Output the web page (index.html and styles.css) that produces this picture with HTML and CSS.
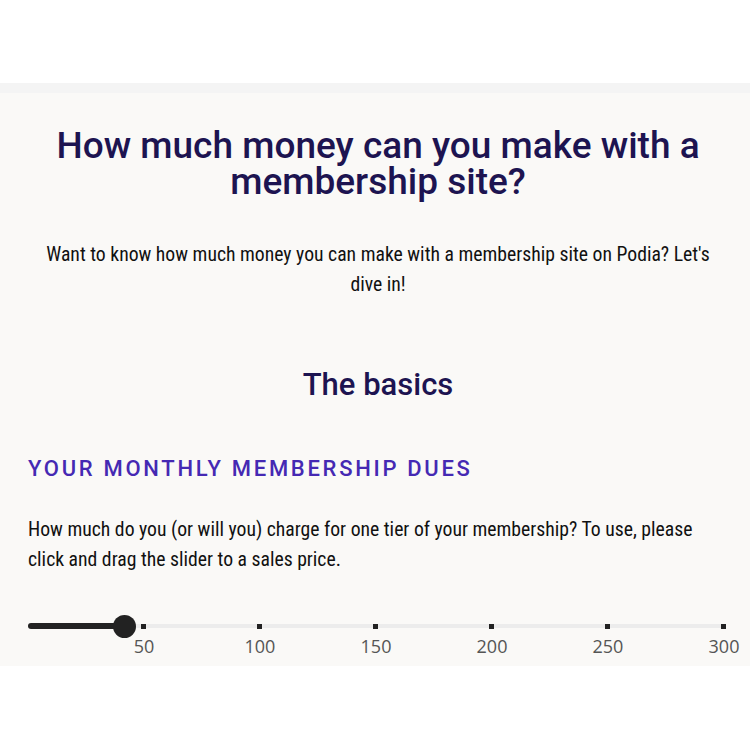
FILE: index.html
```html
<!DOCTYPE html>
<html lang="en">
<head>
<meta charset="utf-8">
<title>Membership calculator</title>
<link rel="stylesheet" href="styles.css">
</head>
<body>
<header class="topbar"></header>
<div class="band"></div>
<main class="calc">
  <h1 class="title">How much money can you make with a membership site?</h1>
  <p class="intro">Want to know how much money you can make with a membership site on Podia? Let's dive in!</p>
  <h2 class="section">The basics</h2>
  <h3 class="label">Your monthly membership dues</h3>
  <p class="desc">How much do you (or will you) charge for one tier of your membership? To use, please click and drag the slider to a sales price.</p>
  <div class="slider">
    <div class="track">
      <div class="fill" style="width: 13.9%"></div>
      <span class="tick" style="left: 16.667%"></span>
      <span class="tick" style="left: 33.333%"></span>
      <span class="tick" style="left: 50%"></span>
      <span class="tick" style="left: 66.667%"></span>
      <span class="tick" style="left: 83.333%"></span>
      <span class="tick" style="left: 100%"></span>
      <span class="thumb" style="left: 13.9%"></span>
    </div>
    <div class="scale">
      <span class="num" style="left: 16.667%">50</span>
      <span class="num" style="left: 33.333%">100</span>
      <span class="num" style="left: 50%">150</span>
      <span class="num" style="left: 66.667%">200</span>
      <span class="num" style="left: 83.333%">250</span>
      <span class="num" style="left: 100%">300</span>
    </div>
  </div>
</main>
</body>
</html>
```
FILE: styles.css
```css
* { box-sizing: border-box; }
html, body { margin: 0; padding: 0; background: #ffffff; }
body { font-family: Roboto, "Noto Sans", Arial, sans-serif; color: #111; }

.topbar { height: 83px; background: #ffffff; }
.band { height: 10px; background: #f4f4f4; }

.calc {
  background: #faf9f7;
  padding: 35px 22px 0 28px;
  height: 573px;
}

.title {
  margin: 0;
  font-size: 37px;
  line-height: 36px;
  font-weight: 500;
  color: #1d1451;
  text-align: center;
}

.intro {
  margin: 40px 0 0 0;
  padding: 0 10px;
  font-family: "Roboto Condensed", Roboto, sans-serif;
  font-stretch: condensed;
  font-size: 19.7px;
  line-height: 30px;
  text-align: center;
}

.section {
  margin: 67px 0 0 0;
  font-size: 31px;
  line-height: 36px;
  font-weight: 500;
  color: #1d1451;
  text-align: center;
}

.label {
  margin: 52px 0 0 0;
  font-size: 22px;
  line-height: 28px;
  font-weight: 500;
  letter-spacing: 2.7px;
  text-transform: uppercase;
  color: #4529b3;
}

.desc {
  margin: 32px 0 0 0;
  font-family: "Roboto Condensed", Roboto, sans-serif;
  font-stretch: condensed;
  font-size: 19.7px;
  line-height: 30px;
}

.slider {
  margin-top: 49px;
  width: 696px;
}

.track {
  position: relative;
  height: 4px;
  background: #ececec;
}

.fill {
  position: absolute;
  left: 0;
  top: -1px;
  height: 6px;
  background: #222222;
  border-radius: 3px;
}

.tick {
  position: absolute;
  top: 0;
  width: 5px;
  height: 5px;
  margin-left: -3px;
  background: #222222;
}

.thumb {
  position: absolute;
  top: 50%;
  width: 23px;
  height: 23px;
  margin: -11.5px 0 0 -11.5px;
  border-radius: 50%;
  background: #222222;
}

.scale {
  position: relative;
  height: 24px;
  margin-top: 8px;
}

.num {
  position: absolute;
  top: 0;
  transform: translateX(-50%);
  font-family: "Open Sans", "Liberation Sans", Arial, sans-serif;
  font-size: 18px;
  line-height: 20px;
  color: #555555;
}
```
